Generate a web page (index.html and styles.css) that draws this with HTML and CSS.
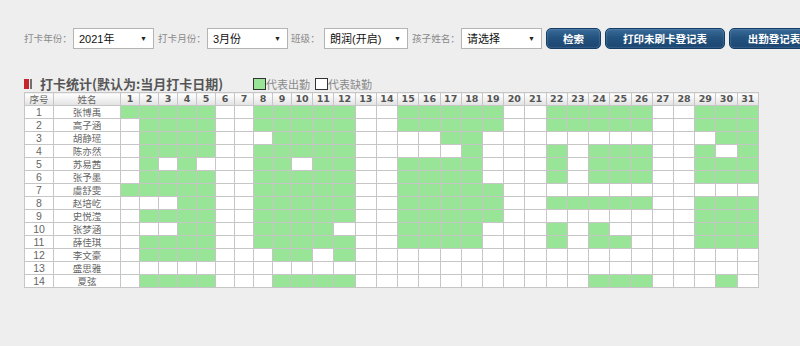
FILE: index.html
```html
<!DOCTYPE html>
<html lang="zh">
<head>
<meta charset="utf-8">
<title>打卡统计</title>
<link rel="stylesheet" href="styles.css">
</head>
<body>
<div class="page">
  <div class="toolbar">
    <span class="lbl">打卡年份：</span>
    <div class="sel">2021年<i>▼</i></div>
    <span class="lbl">打卡月份：</span>
    <div class="sel">3月份<i>▼</i></div>
    <span class="lbl short">班级：</span>
    <div class="sel wide">朗润(开启)<i>▼</i></div>
    <span class="lbl">孩子姓名：</span>
    <div class="sel">请选择<i>▼</i></div>
    <div class="btn b1">检索</div>
    <div class="btn b2">打印未刷卡登记表</div>
    <div class="btn b3">出勤登记表</div>
  </div>

  <div class="title-row">
    <span class="ico"></span><span class="ico2"></span>
    <span class="title">打卡统计(默认为:当月打卡日期)</span>
    <div class="legend">
      <span class="box on"></span><span class="ltxt">代表出勤</span>
      <span class="box"></span><span class="ltxt">代表缺勤</span>
    </div>
  </div>

  <table class="grid">
    <colgroup>
      <col class="c-no"><col class="c-name">
      <col class="c-d"><col class="c-d"><col class="c-d"><col class="c-d"><col class="c-d"><col class="c-d"><col class="c-d"><col class="c-d"><col class="c-d">
      <col><col><col><col><col><col><col><col><col><col><col><col><col><col><col><col><col><col><col><col><col><col>
    </colgroup>
    <thead>
      <tr>
        <th class="txt">序号</th><th class="txt">姓名</th>
        <th>1</th><th>2</th><th>3</th><th>4</th><th>5</th><th>6</th><th>7</th><th>8</th><th>9</th><th>10</th>
        <th>11</th><th>12</th><th>13</th><th>14</th><th>15</th><th>16</th><th>17</th><th>18</th><th>19</th><th>20</th>
        <th>21</th><th>22</th><th>23</th><th>24</th><th>25</th><th>26</th><th>27</th><th>28</th><th>29</th><th>30</th><th>31</th>
      </tr>
    </thead>
    <tbody>
      <tr><td class="no">1</td><td class="nm">张博禹</td>
        <td class="g"></td><td class="g"></td><td class="g"></td><td class="g"></td><td class="g"></td><td></td><td></td>
        <td class="g"></td><td class="g"></td><td class="g"></td><td class="g"></td><td class="g"></td><td></td><td></td>
        <td class="g"></td><td class="g"></td><td class="g"></td><td class="g"></td><td class="g"></td><td></td><td></td>
        <td class="g"></td><td class="g"></td><td class="g"></td><td class="g"></td><td class="g"></td><td></td><td></td>
        <td class="g"></td><td class="g"></td><td class="g"></td></tr>
      <tr><td class="no">2</td><td class="nm">高子涵</td>
        <td></td><td class="g"></td><td class="g"></td><td class="g"></td><td class="g"></td><td></td><td></td>
        <td class="g"></td><td class="g"></td><td class="g"></td><td class="g"></td><td class="g"></td><td></td><td></td>
        <td class="g"></td><td class="g"></td><td class="g"></td><td class="g"></td><td class="g"></td><td></td><td></td>
        <td class="g"></td><td class="g"></td><td class="g"></td><td class="g"></td><td class="g"></td><td></td><td></td>
        <td class="g"></td><td class="g"></td><td class="g"></td></tr>
      <tr><td class="no">3</td><td class="nm">胡静瑶</td>
        <td></td><td class="g"></td><td class="g"></td><td class="g"></td><td class="g"></td><td></td><td></td>
        <td></td><td class="g"></td><td class="g"></td><td class="g"></td><td class="g"></td><td></td><td></td>
        <td></td><td></td><td class="g"></td><td class="g"></td><td></td><td></td><td></td>
        <td></td><td></td><td></td><td></td><td></td><td></td><td></td>
        <td></td><td class="g"></td><td class="g"></td></tr>
      <tr><td class="no">4</td><td class="nm">陈亦然</td>
        <td></td><td class="g"></td><td class="g"></td><td class="g"></td><td class="g"></td><td></td><td></td>
        <td class="g"></td><td class="g"></td><td class="g"></td><td class="g"></td><td class="g"></td><td></td><td></td>
        <td></td><td></td><td></td><td class="g"></td><td></td><td></td><td></td>
        <td class="g"></td><td></td><td class="g"></td><td class="g"></td><td class="g"></td><td></td><td></td>
        <td class="g"></td><td></td><td class="g"></td></tr>
      <tr><td class="no">5</td><td class="nm">苏易茜</td>
        <td></td><td class="g"></td><td></td><td class="g"></td><td></td><td></td><td></td>
        <td class="g"></td><td class="g"></td><td></td><td class="g"></td><td class="g"></td><td></td><td></td>
        <td class="g"></td><td class="g"></td><td class="g"></td><td class="g"></td><td></td><td></td><td></td>
        <td class="g"></td><td></td><td class="g"></td><td class="g"></td><td class="g"></td><td></td><td></td>
        <td class="g"></td><td class="g"></td><td class="g"></td></tr>
      <tr><td class="no">6</td><td class="nm">张予墨</td>
        <td></td><td class="g"></td><td class="g"></td><td class="g"></td><td class="g"></td><td></td><td></td>
        <td class="g"></td><td class="g"></td><td class="g"></td><td class="g"></td><td class="g"></td><td></td><td></td>
        <td class="g"></td><td class="g"></td><td class="g"></td><td class="g"></td><td></td><td></td><td></td>
        <td class="g"></td><td></td><td class="g"></td><td class="g"></td><td class="g"></td><td></td><td></td>
        <td class="g"></td><td class="g"></td><td class="g"></td></tr>
      <tr><td class="no">7</td><td class="nm">虞舒雯</td>
        <td class="g"></td><td class="g"></td><td class="g"></td><td class="g"></td><td class="g"></td><td></td><td></td>
        <td class="g"></td><td class="g"></td><td class="g"></td><td class="g"></td><td class="g"></td><td></td><td></td>
        <td class="g"></td><td class="g"></td><td class="g"></td><td class="g"></td><td class="g"></td><td></td><td></td>
        <td></td><td></td><td></td><td></td><td></td><td></td><td></td>
        <td></td><td></td><td></td></tr>
      <tr><td class="no">8</td><td class="nm">赵培屹</td>
        <td></td><td></td><td></td><td class="g"></td><td class="g"></td><td></td><td></td>
        <td class="g"></td><td class="g"></td><td class="g"></td><td class="g"></td><td class="g"></td><td></td><td></td>
        <td class="g"></td><td class="g"></td><td class="g"></td><td class="g"></td><td class="g"></td><td></td><td></td>
        <td class="g"></td><td class="g"></td><td class="g"></td><td class="g"></td><td class="g"></td><td></td><td></td>
        <td class="g"></td><td class="g"></td><td class="g"></td></tr>
      <tr><td class="no">9</td><td class="nm">史悦滢</td>
        <td></td><td class="g"></td><td class="g"></td><td class="g"></td><td class="g"></td><td></td><td></td>
        <td class="g"></td><td class="g"></td><td class="g"></td><td class="g"></td><td class="g"></td><td></td><td></td>
        <td class="g"></td><td class="g"></td><td class="g"></td><td class="g"></td><td class="g"></td><td></td><td></td>
        <td></td><td></td><td></td><td></td><td></td><td></td><td></td>
        <td class="g"></td><td class="g"></td><td class="g"></td></tr>
      <tr><td class="no">10</td><td class="nm">张梦涵</td>
        <td></td><td></td><td></td><td class="g"></td><td class="g"></td><td></td><td></td>
        <td class="g"></td><td class="g"></td><td class="g"></td><td class="g"></td><td></td><td></td><td></td>
        <td class="g"></td><td class="g"></td><td class="g"></td><td class="g"></td><td></td><td></td><td></td>
        <td class="g"></td><td></td><td class="g"></td><td></td><td></td><td></td><td></td>
        <td class="g"></td><td class="g"></td><td class="g"></td></tr>
      <tr><td class="no">11</td><td class="nm">薛佳琪</td>
        <td></td><td class="g"></td><td class="g"></td><td class="g"></td><td class="g"></td><td></td><td></td>
        <td class="g"></td><td class="g"></td><td class="g"></td><td class="g"></td><td class="g"></td><td></td><td></td>
        <td class="g"></td><td class="g"></td><td class="g"></td><td class="g"></td><td></td><td></td><td></td>
        <td class="g"></td><td></td><td class="g"></td><td class="g"></td><td></td><td></td><td></td>
        <td class="g"></td><td class="g"></td><td class="g"></td></tr>
      <tr><td class="no">12</td><td class="nm">李文豪</td>
        <td></td><td class="g"></td><td class="g"></td><td class="g"></td><td class="g"></td><td></td><td></td>
        <td></td><td class="g"></td><td class="g"></td><td></td><td class="g"></td><td></td><td></td>
        <td></td><td></td><td></td><td></td><td></td><td></td><td></td>
        <td></td><td></td><td></td><td></td><td></td><td></td><td></td>
        <td></td><td></td><td></td></tr>
      <tr><td class="no">13</td><td class="nm">盛思雅</td>
        <td></td><td></td><td></td><td></td><td></td><td></td><td></td>
        <td></td><td></td><td></td><td></td><td></td><td></td><td></td>
        <td></td><td></td><td></td><td></td><td></td><td></td><td></td>
        <td></td><td></td><td></td><td></td><td></td><td></td><td></td>
        <td></td><td></td><td></td></tr>
      <tr><td class="no">14</td><td class="nm">夏弦</td>
        <td></td><td class="g"></td><td class="g"></td><td class="g"></td><td class="g"></td><td></td><td></td>
        <td></td><td class="g"></td><td class="g"></td><td class="g"></td><td class="g"></td><td></td><td></td>
        <td></td><td></td><td></td><td></td><td></td><td></td><td></td>
        <td></td><td></td><td class="g"></td><td class="g"></td><td class="g"></td><td></td><td></td>
        <td></td><td class="g"></td><td></td></tr>
    </tbody>
  </table>
</div>
</body>
</html>
```

FILE: styles.css
```css
* { box-sizing: border-box; }
html, body { margin: 0; padding: 0; background: #eeeeee; overflow: hidden; }
body {
  font-family: "Noto Sans CJK SC", "Liberation Sans", sans-serif;
  color: #555;
}
.page { padding: 27px 0 0 24px; }

/* toolbar */
.toolbar {
  display: flex;
  align-items: center;
  height: 22px;
  white-space: nowrap;
  overflow: hidden;
}
.lbl {
  flex: none;
  width: 53px;
  padding-left: 4px;
  font-size: 9.6px;
  color: #8a8a8a;
}
.lbl:first-child { width: 49px; padding-left: 0; }
.lbl.short { width: 36px; padding-left: 3px; }
.sel {
  flex: none;
  width: 81px;
  height: 21px;
  background: #fff;
  border: 1px solid #b4b4b4;
  display: flex;
  align-items: center;
  justify-content: space-between;
  padding: 0 6px 0 5px;
  font-family: "Liberation Sans", "Noto Sans CJK SC", sans-serif;
  font-size: 11px;
  color: #111;
}
.sel.wide { width: 84px; }
.sel i { font-style: normal; font-size: 7px; color: #222; }
.btn {
  flex: none;
  height: 21px;
  margin-left: 4px;
  border-radius: 5px;
  border: 1px solid #153d63;
  background: linear-gradient(#3a6b99, #24537f 45%, #1b4670);
  box-shadow: inset 0 0 2px rgba(160, 200, 240, 0.6);
  color: #fff;
  font-size: 10.5px;
  font-weight: bold;
  display: flex;
  align-items: center;
  justify-content: center;
}
.b1 { width: 55px; }
.b2 { width: 120px; }
.b3 { width: 90px; }

/* title */
.title-row {
  display: flex;
  align-items: center;
  height: 17px;
  margin-top: 26px;
}
.ico { width: 5px; height: 10px; background: #c4262d; }
.ico2 { width: 2px; height: 10px; background: #707070; margin-left: 1px; }
.title {
  width: 221px;
  padding-left: 8px;
  font-size: 13px;
  font-weight: bold;
  color: #555;
  white-space: nowrap;
}
.legend {
  display: flex;
  align-items: flex-end;
  height: 17px;
  padding-bottom: 2px;
}
.box {
  width: 13px;
  height: 12px;
  border: 1px solid #333;
  background: #fff;
}
.box.on { background: #98e598; }
.ltxt {
  font-size: 11px;
  line-height: 11px;
  color: #8a8a8a;
  margin-right: 5px;
}

/* grid */
.grid {
  border-collapse: collapse;
  table-layout: fixed;
  width: 735px;
}
.c-no { width: 29px; }
.c-name { width: 67px; }
.c-d { width: 19px; }
.grid th, .grid td {
  border: 1px solid #c6c6c6;
  padding: 0;
  height: 13px;
  line-height: 12px;
  text-align: center;
  font-size: 10px;
  color: #666;
  background: #fff;
  overflow: hidden;
  white-space: nowrap;
}
.grid td.no {
  font-family: "Liberation Sans", sans-serif;
  font-size: 10.5px;
}
.grid td.nm { font-size: 9.5px; }
.grid th {
  background: linear-gradient(#ffffff, #e2e2e2);
  font-family: "DejaVu Sans", sans-serif;
  font-weight: bold;
  font-size: 9.5px;
  color: #555;
}
.grid th.txt {
  font-family: "Noto Sans CJK SC", sans-serif;
  font-weight: normal;
  font-size: 9.5px;
  color: #666;
}
.grid td.g { background: #98e598; }
```
